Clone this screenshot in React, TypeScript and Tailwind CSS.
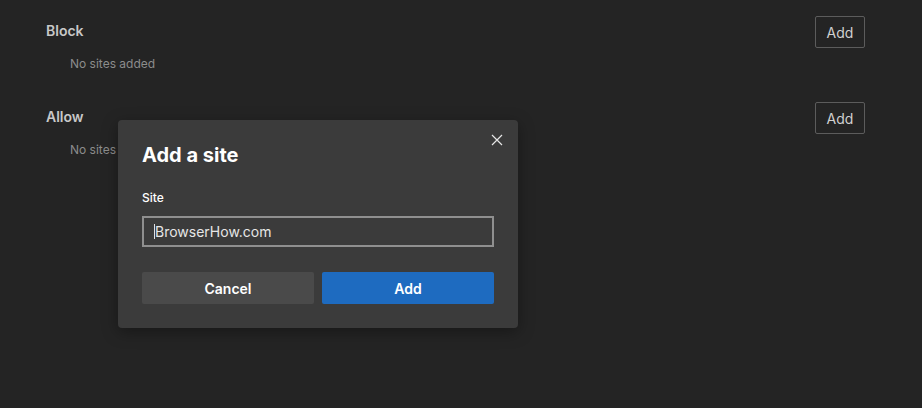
import React from "react";

export default function App() {
  const font = { fontFamily: "Inter, 'Noto Sans', 'Liberation Sans', sans-serif" };
  return (
    <div className="relative w-[922px] h-[408px] bg-[#242424] overflow-hidden" style={font}>
      <div className="pl-[46px] pr-[57px] pt-[16px] flex flex-col">
        <div className="flex items-center justify-between h-[32px]">
          <span className="text-[14px] font-semibold text-[#c8c8c8] -mt-[4px]">Block</span>
          <button className="w-[50px] h-[32px] border border-[#5c5c5c] rounded-[2px] text-[14px] text-[#d0d0d0]">Add</button>
        </div>
        <div className="pl-[24px] mt-[7px] text-[12px] text-[#8c8c8c] leading-[18px]">No sites added</div>
        <div className="flex items-center justify-between h-[32px] mt-[29px]">
          <span className="text-[14px] font-semibold text-[#c8c8c8] -mt-[4px]">Allow</span>
          <button className="w-[50px] h-[32px] border border-[#5c5c5c] rounded-[2px] text-[14px] text-[#d0d0d0]">Add</button>
        </div>
        <div className="pl-[24px] mt-[7px] text-[12px] text-[#8c8c8c] leading-[18px]">No sites added</div>
      </div>

      <div className="absolute left-[118px] top-[120px] w-[400px] h-[208px] bg-[#3b3b3b] rounded-[4px] shadow-[0_4px_16px_rgba(0,0,0,0.35)] px-[24px] pt-[22px]">
        <button className="absolute right-[14px] top-[13px] w-[14px] h-[14px] flex items-center justify-center">
          <svg width="12" height="12" viewBox="0 0 12 12" fill="none" stroke="#e6e6e6" strokeWidth="1.2">
            <path d="M1 1 L11 11 M11 1 L1 11" />
          </svg>
        </button>
        <div className="text-[20px] font-bold text-white leading-[26px]">Add a site</div>
        <div className="mt-[22px] text-[12px] font-medium text-white leading-[16px]">Site</div>
        <div className="mt-[10px] w-[352px] h-[31px] border-2 border-[#8f8f8f] flex items-center pl-[10px]">
          <span className="w-px h-[15px] bg-[#e0e0e0]" />
          <span className="text-[14px] text-[#e6e6e6]">BrowserHow.com</span>
        </div>
        <div className="mt-[25px] flex gap-[8px]">
          <button className="w-[172px] h-[32px] rounded-[2px] bg-[#4a4a4a] text-[14px] font-semibold text-white">Cancel</button>
          <button className="w-[172px] h-[32px] rounded-[2px] bg-[#1e6bc0] text-[14px] font-semibold text-white">Add</button>
        </div>
      </div>
    </div>
  );
}
